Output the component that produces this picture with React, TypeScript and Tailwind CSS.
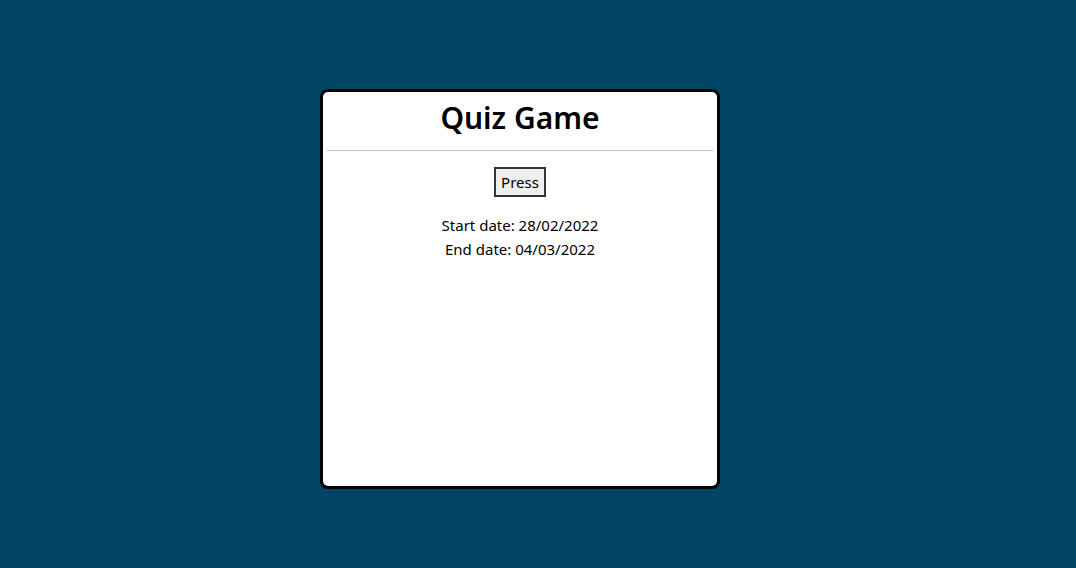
export default function App() {
  return (
    <div
      className="w-full h-[568px] bg-[#004563] flex items-start justify-center pt-[89px] pr-[36px]"
      style={{ fontFamily: '"Noto Sans", "Open Sans", sans-serif' }}
    >
      <div className="w-[400px] h-[400px] bg-white border-[3px] border-black rounded-[8px] flex flex-col items-center">
        <h1 className="text-[30px] font-semibold text-black leading-[43px] mt-[4px]">Quiz Game</h1>
        <hr className="w-[386px] border-0 border-t border-[#c4c4c4] mt-[11px]" />
        <button className="mt-[16px] h-[30px] px-[5px] bg-[#efefef] border-2 border-[#333] text-[15px] text-black leading-none">
          Press
        </button>
        <div className="mt-[16px] text-[15px] text-black leading-[24px] text-center">
          <p>Start date: 28/02/2022</p>
          <p>End date: 04/03/2022</p>
        </div>
      </div>
    </div>
  )
}
